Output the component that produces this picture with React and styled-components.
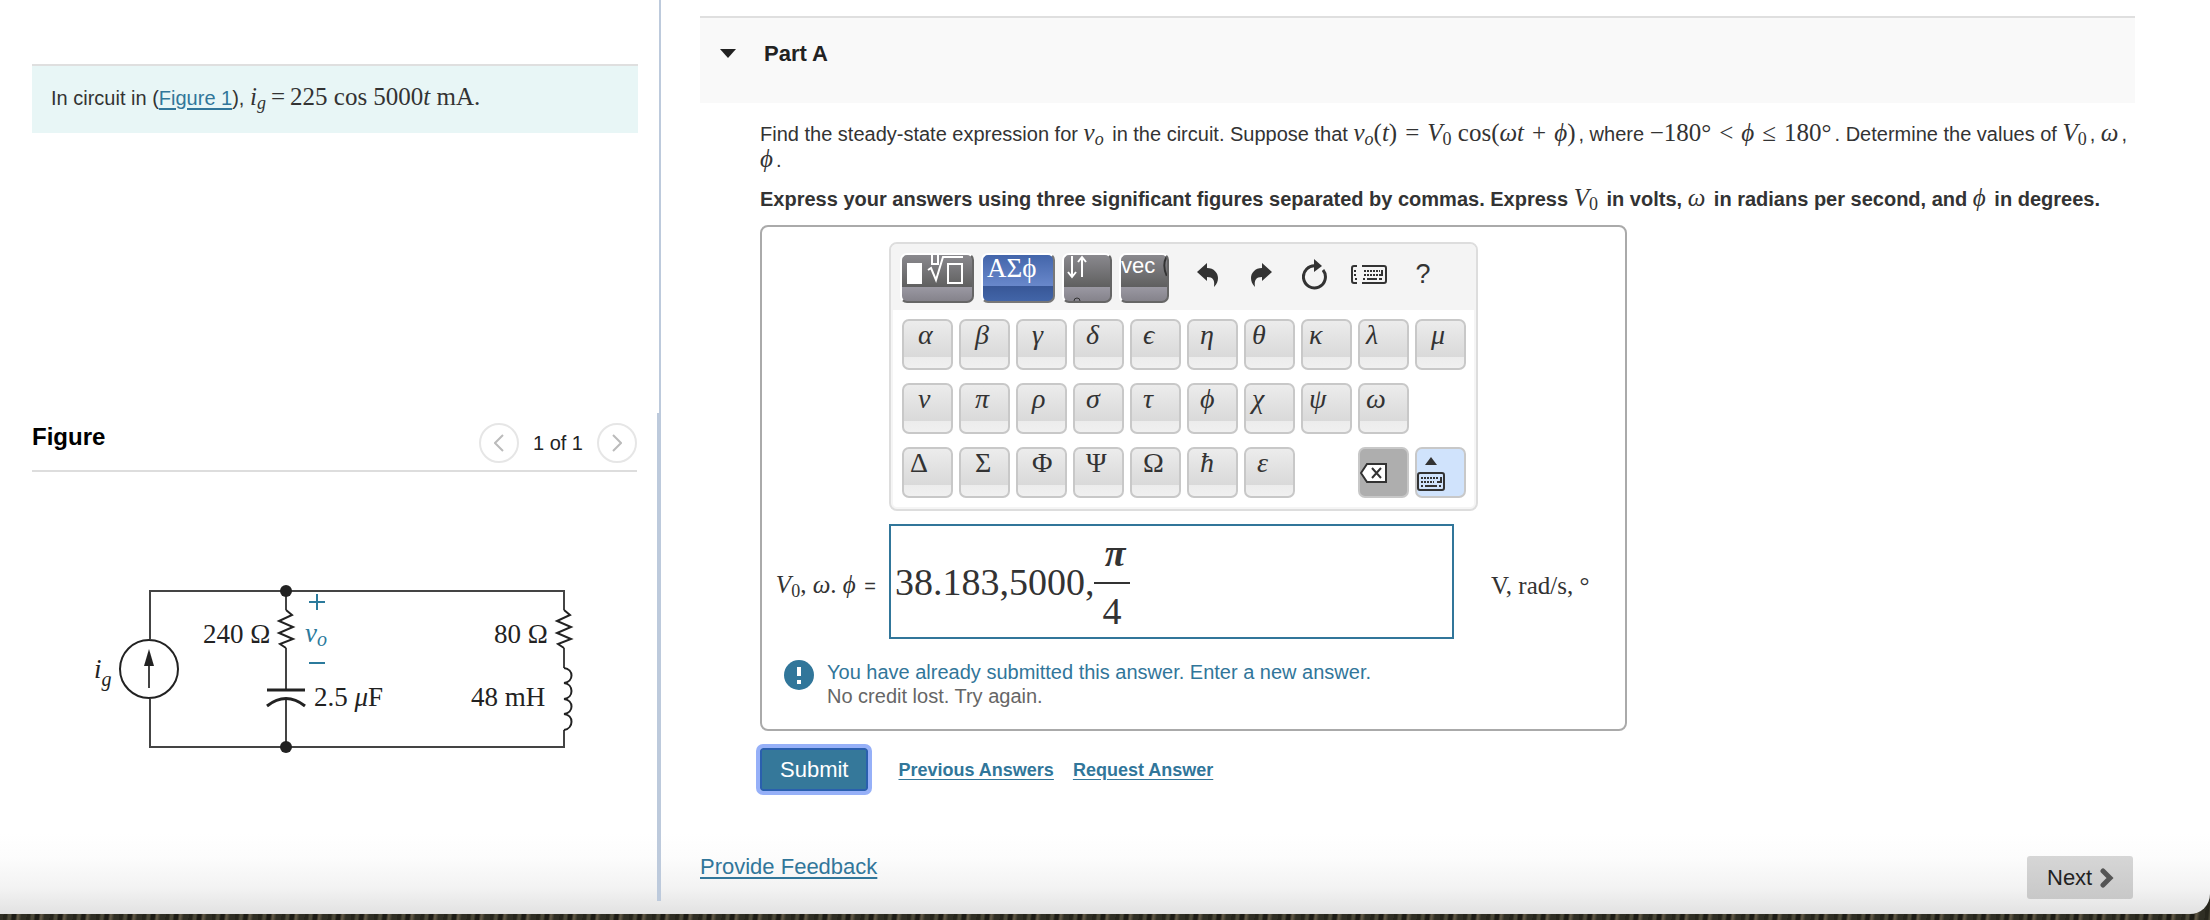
import React from "react";
import styled, { createGlobalStyle, css } from "styled-components";

const GlobalStyle = createGlobalStyle`
  :root {
    --color-link: #31769a;
    --color-text: #333;
    --color-line: #ddd;
    --color-divider: #bdcadc;
    --font-sans: "Liberation Sans", Arial, sans-serif;
    --font-serif: "Liberation Serif", "Times New Roman", serif;
  }

  * {
    box-sizing: border-box;
  }

  body {
    margin: 0;
    padding-bottom: 6px;
    font-family: var(--font-sans);
    font-size: 20px;
    line-height: 26px;
    color: var(--color-text);
    background: repeating-linear-gradient(
        97deg,
        #26251c 0 3px,
        #4a4737 5px 7px,
        #1c1b15 9px 12px,
        #5d5543 14px 15px,
        #2f2e24 18px 23px
      ),
      #2b2a21;
  }

  p {
    margin: 0;
  }

  button {
    font-family: inherit;
    cursor: pointer;
  }

  a {
    color: var(--color-link);
    text-underline-offset: 3px;
  }
`;

const Window = styled.div`
  display: flex;
  min-height: calc(100vh - 6px);
  border-bottom-right-radius: 20px;
  background: linear-gradient(to top, #e2e2e2, #f3f3f3 26px, #fcfcfc 56px, #fff 80px);
`;

/* left side */

const Aside = styled.aside`
  flex: 0 0 calc(30% - 2px);
  display: flex;
  flex-direction: column;
  padding-bottom: 13px;
`;

const Intro = styled.section`
  min-height: 413px;
  padding: 64px 21px 0 32px;
  border-right: 2px solid var(--color-divider);
`;

const IntroBox = styled.p`
  padding: 19px 19px 22px;
  border-top: 2px solid #dfdfdf;
  background: #e8f6f6;
`;

const FigurePanel = styled.section`
  flex: 1;
  padding: 10px 20px 0 32px;
  border-right: 4px solid var(--color-divider);
`;

const FigureHeader = styled.header`
  display: flex;
  justify-content: space-between;
  height: 49px;
  border-bottom: 2px solid var(--color-line);

  h2 {
    margin: 0;
    font-size: 24px;
    line-height: 28px;
    color: #000;
  }
`;

const Pager = styled.div`
  display: flex;
  align-items: center;
  gap: 14px;
  height: 40px;
  color: #222;
`;

const PagerButton = styled.button`
  display: flex;
  align-items: center;
  justify-content: center;
  width: 40px;
  height: 40px;
  padding: 0;
  border: 2px solid #e6e6e6;
  border-radius: 50%;
  background: #fff;
`;

const Circuit = styled.svg`
  display: block;
  width: 500px;
  height: 180px;
  margin: 108px 0 0 48px;
  font-family: var(--font-serif);
  font-size: 27px;
`;

/* maths */

const Math = styled.span`
  padding-right: 3px;
  font-family: var(--font-serif);
  font-size: 25px;
  font-weight: 400;
  line-height: 0;
  white-space: nowrap;

  sub {
    font-size: 18px;
    line-height: 0;
    vertical-align: -4px;
  }
`;

const Op = styled.span`
  padding: 0 ${(props) => (props.$tight ? 5 : 8)}px;
`;

/* right side */

const Main = styled.main`
  flex: 1;
  min-width: 0;
  display: flex;
  flex-direction: column;
  padding: 16px 75px 15px 39px;
`;

const PartHeader = styled.header`
  display: flex;
  gap: 28px;
  height: 87px;
  padding: 23px 20px;
  border-top: 2px solid #dfdfdf;
  background: #f9f9f9;

  svg {
    margin-top: 8px;
  }

  h2 {
    margin: 0;
    font-size: 22px;
    line-height: 26px;
    color: #222;
  }
`;

const PartBody = styled.div`
  display: flex;
  flex-direction: column;
  gap: 13px;
  padding: 18px 0 0 60px;
`;

const Instruction = styled.p`
  font-weight: 700;
`;

const AnswerBox = styled.div`
  display: grid;
  grid-template-columns: 103px 589px 1fr;
  column-gap: 13px;
  align-items: center;
  max-width: 867px;
  padding: 15px 0 21px 11px;
  border: 2px solid #aaa;
  border-radius: 8px;
`;

const Palette = styled.div`
  grid-column: 2 / 3;
  border: 2px solid var(--color-line);
  border-radius: 8px;
  background: #fff;
  box-shadow: inset 0 0 0 2px #f5f5f5;
  overflow: hidden;
`;

const Toolbar = styled.div`
  display: flex;
  gap: 7px;
  height: 66px;
  padding: 9px;
  background: #f4f4f4;
`;

const ToolTab = styled.button`
  flex: none;
  display: flex;
  width: ${(props) => (props.$wide ? 74 : 50)}px;
  height: 50px;
  padding: 0;
  border: solid;
  border-width: 2px;
  border-color: #fff #666 #666 #fff;
  border-radius: 7px;
  color: #fff;
  font-size: 22px;
  line-height: 22px;
  background: linear-gradient(#8a898e, #5f5f5f 70%, #9a98a2 70%, #85838b);
  overflow: hidden;

  ${(props) =>
    props.$active &&
    css`
      padding-left: 4px;
      border-color: #fff #777 #777 #fff;
      font-family: var(--font-serif);
      font-size: 27px;
      line-height: 26px;
      background: linear-gradient(#4365aa, #6988cb 68%, #385797 68%, #4265a8);
    `}
`;

const ToolIcons = styled.div`
  display: flex;
  margin-left: 4px;
`;

const IconButton = styled.button`
  display: flex;
  align-items: center;
  justify-content: center;
  width: 54px;
  height: 43px;
  padding: 0;
  border: 0;
  background: none;
  color: #333;
  font-size: 27px;
`;

const Keys = styled.div`
  display: grid;
  grid-template-columns: repeat(10, 51px);
  gap: 13px 6px;
  padding: 9px 11px 11px;
`;

const insets = { far: 14, mid: 11, near: 6 };

const Key = styled.button`
  display: flex;
  height: 51px;
  padding: 0 0 0 ${(props) => insets[props.$inset]}px;
  border: 2px solid #c8c8c8;
  border-radius: 7px;
  color: var(--color-text);
  font-family: var(--font-serif);
  font-size: 28px;
  font-style: ${(props) => (props.$upright ? "normal" : "italic")};
  line-height: 28px;
  background: linear-gradient(#ececec, #d9d9d9 77%, #ececec 77%, #f0f0f0);
`;

const DeleteKey = styled(Key)`
  grid-column: 9;
  align-items: center;
  padding: 0;
  background: #aeaeae;
`;

const KeyboardKey = styled(Key)`
  padding: 0;
  background: #d0e3fc;
`;

const AnswerLabel = styled.label`
  grid-column: 1;
  text-align: right;
  white-space: nowrap;
`;

const AnswerField = styled.div`
  display: flex;
  align-items: center;
  width: 565px;
  height: 115px;
  margin: 13px 0 21px;
  padding-left: 4px;
  border: 2px solid var(--color-link);
  background: #fff;
  font-family: var(--font-serif);
  font-size: 38px;
`;

const AnswerInput = styled.input`
  width: 199px;
  height: 60px;
  padding: 0;
  border: 0;
  outline: 0;
  color: inherit;
  font: inherit;
  background: none;
`;

const Fraction = styled.span`
  display: grid;
  justify-items: center;
  width: 36px;
  line-height: 38px;

  i {
    width: 100%;
    padding: 0 0 10px 6px;
    border-bottom: 2px solid;
    font-weight: 700;
    text-align: center;
  }

  span {
    padding-top: 8px;
  }
`;

const Feedback = styled.div`
  grid-column: 1 / -1;
  display: flex;
  gap: 13px;
  padding-left: 11px;
  line-height: 24px;
  color: #666;

  strong {
    font-weight: 400;
    color: var(--color-link);
  }
`;

const Actions = styled.div`
  display: flex;
  align-items: center;
  gap: 19px;
  padding-top: 4px;
  font-size: 18px;
  font-weight: 700;
`;

const SubmitButton = styled.button`
  height: 43px;
  margin-right: 11px;
  padding: 0 18px;
  border: 2px solid #2a5fae;
  border-radius: 3px;
  outline: 4px solid #96b0f8;
  color: #fff;
  font-size: 22px;
  background: #35789a;
`;

const Footer = styled.footer`
  display: flex;
  align-items: flex-start;
  justify-content: space-between;
  margin-top: auto;
  font-size: 22px;

  a {
    line-height: 22px;
  }
`;

const NextButton = styled.button`
  display: flex;
  align-items: center;
  gap: 8px;
  width: 106px;
  height: 43px;
  margin-right: 2px;
  padding: 0 0 0 20px;
  border: 0;
  border-radius: 3px;
  color: #222;
  font-size: 22px;
  background: linear-gradient(#d6d6d6, #c8c8c8);
`;

const keys = [
  ["α", "far"],
  ["β", "far"],
  ["γ", "far"],
  ["δ", "mid"],
  ["ϵ", "mid"],
  ["η", "mid"],
  ["θ", "near"],
  ["κ", "near"],
  ["λ", "near"],
  ["μ", "far"],
  ["ν", "far"],
  ["π", "far"],
  ["ρ", "far"],
  ["σ", "mid"],
  ["τ", "mid"],
  ["ϕ", "mid"],
  ["χ", "near"],
  ["ψ", "near"],
  ["ω", "near"],
];

const upperKeys = [
  ["Δ", "near", true],
  ["Σ", "far", true],
  ["Φ", "far", true],
  ["Ψ", "mid", true],
  ["Ω", "mid", true],
  ["ħ", "mid"],
  ["ε", "mid"],
];

function Chevron({ flip }) {
  return (
    <svg width="10" height="18" viewBox="0 0 10 18">
      <path
        d={flip ? "M1 1l8 8-8 8" : "M9 1L1 9l8 8"}
        fill="none"
        stroke="#bbb"
        strokeWidth="2"
      />
    </svg>
  );
}

function KeyboardIcon() {
  return (
    <g fill="none" stroke="#333" strokeWidth="2">
      <rect x="1" y="1" width="26" height="17" rx="2" />
      <path d="M4 6h17M4 10h13" strokeDasharray="2 1" />
      <path d="M24 5v5h-4M4 14h2M8 14h12M22 14h2" />
    </g>
  );
}

function CircuitFigure() {
  return (
    <Circuit viewBox="80 580 500 180" role="img" aria-label="Figure 1">
      <g fill="none" stroke="#444" strokeWidth="2">
        <path d="M150 639V591H564V610M150 699V747H564V730" />
        <path d="M286 591V610M286 648V690M286 698V747M564 648V668" />
        <path
          stroke="#222"
          d="M286 610l6 5-13 6 14 6-14 6 14 6-13 5 6 4M564 610l6 5-13 6 14 6-14 6 14 6-13 5 6 4"
        />
        <circle cx="149" cy="669" r="29" stroke="#222" />
        <path d="M149 688V664" />
        <path d="M267 690h38" strokeWidth="3" stroke="#222" />
        <path d="M267 706q19-15 38 0" strokeWidth="3" stroke="#222" />
        <path
          stroke="#222"
          d="M564 668c10 1 10 14 0 15c10 1 10 15 0 16c10 1 10 14 0 15c10 1 10 14 0 16"
        />
      </g>
      <path d="M149 649l5 17h-10z" fill="#222" />
      <circle cx="286" cy="591" r="6" fill="#222" />
      <circle cx="286" cy="747" r="6" fill="#222" />
      <g fill="#222">
        <text x="203" y="643">240 Ω</text>
        <text x="494" y="643">80 Ω</text>
        <text x="314" y="706">
          2.5 <tspan fontStyle="italic">μ</tspan>F
        </text>
        <text x="471" y="706">48 mH</text>
        <text x="94" y="678" fontStyle="italic">
          i
          <tspan dy="8" fontSize="20">
            g
          </tspan>
        </text>
      </g>
      <path d="M309 602h16M317 594v16M309 663h16" stroke="#2b7a9c" strokeWidth="2" />
      <text x="305" y="642" fill="#2b7a9c" fontStyle="italic">
        v
        <tspan dy="4" fontSize="20">
          o
        </tspan>
      </text>
    </Circuit>
  );
}

function MathPalette() {
  return (
    <Palette>
      <Toolbar>
        <ToolTab $wide aria-label="Templates">
          <svg width="70" height="32" viewBox="2 2 70 32" fill="none" stroke="#fff" strokeWidth="2">
            <rect x="7" y="10" width="15" height="21" fill="#fff" stroke="none" />
            <path d="M32 2v9h6V2" />
            <path d="M28 17l3-2 5 12L43 4h20" />
            <rect x="48" y="11" width="14" height="19" />
          </svg>
        </ToolTab>
        <ToolTab $wide $active>
          ΑΣϕ
        </ToolTab>
        <ToolTab aria-label="Arrows">
          <svg width="46" height="46" viewBox="0 0 46 46" fill="none" stroke="#fff" strokeWidth="2">
            <path d="M8 1v20M4 17l4 5 4-5M18 22V2M14 7l4-5 4 5" />
            <path d="M10 46q0-3 3-3t3 3" stroke="#333" strokeWidth="1" />
          </svg>
        </ToolTab>
        <ToolTab>
          vec
          <svg width="12" height="24" viewBox="0 0 12 24">
            <path d="M12 1q-5 9 0 20" fill="none" stroke="#333" strokeWidth="2" />
          </svg>
        </ToolTab>
        <ToolIcons>
          <IconButton aria-label="Undo">
            <svg width="21" height="24" viewBox="0 0 21 24">
              <path
                d="M0 9L10 0v5c7 0 11 5 11 10 0 3-1 6-4 9 1-7-1-10-7-10v4z"
                fill="currentColor"
              />
            </svg>
          </IconButton>
          <IconButton aria-label="Redo">
            <svg width="21" height="24" viewBox="0 0 21 24">
              <path
                d="M21 9L11 0v5C4 5 0 10 0 15c0 3 1 6 4 9-1-7 1-10 7-10v4z"
                fill="currentColor"
              />
            </svg>
          </IconButton>
          <IconButton aria-label="Reset">
            <svg width="26" height="32" viewBox="0 0 26 32">
              <path
                d="M14 7A11 11 0 1 0 21 11"
                fill="none"
                stroke="currentColor"
                strokeWidth="3"
              />
              <path d="M12 0l8 7-8 6z" fill="currentColor" />
            </svg>
          </IconButton>
          <IconButton aria-label="Keyboard shortcuts">
            <svg width="36" height="20" viewBox="0 0 36 20">
              <path
                d="M6 1H3Q1 1 1 3v13q0 2 2 2h3M11 1h22q2 0 2 2v13q0 2-2 2H11"
                fill="none"
                stroke="currentColor"
                strokeWidth="2"
              />
              <path
                d="M3 6h3M13 6h16M3 10h3M13 10h14"
                stroke="currentColor"
                strokeWidth="2"
                strokeDasharray="2 1"
              />
              <path
                d="M4 14h2M12 14h2M16 14h10M28 14h3M31 5v5h-3"
                fill="none"
                stroke="currentColor"
                strokeWidth="2"
              />
            </svg>
          </IconButton>
          <IconButton aria-label="Help">?</IconButton>
        </ToolIcons>
      </Toolbar>
      <Keys>
        {keys.map(([symbol, inset]) => (
          <Key key={symbol} $inset={inset}>
            {symbol}
          </Key>
        ))}
        <span />
        {upperKeys.map(([symbol, inset, upright]) => (
          <Key key={symbol} $inset={inset} $upright={upright}>
            {symbol}
          </Key>
        ))}
        <DeleteKey aria-label="Delete">
          <svg width="27" height="20" viewBox="0 0 27 20">
            <path d="M1 10L7 1h19v18H7z" fill="#fff" stroke="#333" strokeWidth="2" />
            <path d="M12 5l9 10M21 5l-9 10" stroke="#333" strokeWidth="2" />
          </svg>
        </DeleteKey>
        <KeyboardKey aria-label="Hide keyboard">
          <svg width="28" height="47" viewBox="0 0 28 47">
            <path d="M14 8l6 8H8z" fill="#333" />
            <g transform="translate(0 23)">
              <KeyboardIcon />
            </g>
          </svg>
        </KeyboardKey>
      </Keys>
    </Palette>
  );
}

export default function App() {
  return (
    <>
      <GlobalStyle />
      <Window>
        <Aside>
          <Intro>
            <IntroBox>
              In circuit in (<a href="#figure">Figure 1</a>),{" "}
              <Math>
                <i>i</i>
                <sub>
                  <i>g</i>
                </sub>
                <Op $tight>=</Op>225 cos 5000<i>t</i> mA.
              </Math>
            </IntroBox>
          </Intro>
          <FigurePanel id="figure">
            <FigureHeader>
              <h2>Figure</h2>
              <Pager>
                <PagerButton aria-label="Previous figure">
                  <Chevron />
                </PagerButton>
                <span>1 of 1</span>
                <PagerButton aria-label="Next figure">
                  <Chevron flip />
                </PagerButton>
              </Pager>
            </FigureHeader>
            <CircuitFigure />
          </FigurePanel>
        </Aside>
        <Main>
          <PartHeader>
            <svg width="16" height="9" viewBox="0 0 16 9">
              <path d="M0 0h16L8 9z" fill="#222" />
            </svg>
            <h2>Part A</h2>
          </PartHeader>
          <PartBody>
            <p>
              Find the steady-state expression for{" "}
              <Math>
                <i>v</i>
                <sub>
                  <i>o</i>
                </sub>
              </Math>{" "}
              in the circuit. Suppose that{" "}
              <Math>
                <i>v</i>
                <sub>
                  <i>o</i>
                </sub>
                (<i>t</i>)<Op>=</Op>
                <i>V</i>
                <sub>0</sub> cos(<i>ωt</i>
                <Op>+</Op>
                <i>ϕ</i>)
              </Math>
              , where{" "}
              <Math>
                −180°<Op>&lt;</Op>
                <i>ϕ</i>
                <Op>≤</Op>180°
              </Math>
              . Determine the values of{" "}
              <Math>
                <i>V</i>
                <sub>0</sub>
              </Math>
              ,{" "}
              <Math>
                <i>ω</i>
              </Math>
              ,{" "}
              <Math>
                <i>ϕ</i>
              </Math>
              .
            </p>
            <Instruction>
              Express your answers using three significant figures separated by commas. Express{" "}
              <Math>
                <i>V</i>
                <sub>0</sub>
              </Math>{" "}
              in volts,{" "}
              <Math>
                <i>ω</i>
              </Math>{" "}
              in radians per second, and{" "}
              <Math>
                <i>ϕ</i>
              </Math>{" "}
              in degrees.
            </Instruction>
            <AnswerBox>
              <MathPalette />
              <AnswerLabel htmlFor="answer">
                <Math>
                  <i>V</i>
                  <sub>0</sub>, <i>ω</i>. <i>ϕ</i>
                </Math>{" "}
                =
              </AnswerLabel>
              <AnswerField>
                <AnswerInput id="answer" defaultValue="38.183,5000," />
                <Fraction>
                  <i>π</i>
                  <span>4</span>
                </Fraction>
              </AnswerField>
              <Math>V, rad/s, °</Math>
              <Feedback>
                <svg width="30" height="30" viewBox="0 0 30 30">
                  <circle cx="15" cy="15" r="15" fill="#31769a" />
                  <path d="M15 7v9M15 20v4" stroke="#fff" strokeWidth="4" />
                </svg>
                <p>
                  <strong>You have already submitted this answer. Enter a new answer.</strong>
                  <br />
                  No credit lost. Try again.
                </p>
              </Feedback>
            </AnswerBox>
            <Actions>
              <SubmitButton>Submit</SubmitButton>
              <a href="#previous">Previous Answers</a>
              <a href="#request">Request Answer</a>
            </Actions>
          </PartBody>
          <Footer>
            <a href="#feedback">Provide Feedback</a>
            <NextButton>
              Next
              <svg width="14" height="20" viewBox="0 0 14 20">
                <path
                  d="M3 3l7 7-7 7"
                  fill="none"
                  stroke="#555"
                  strokeWidth="5"
                  strokeLinecap="round"
                />
              </svg>
            </NextButton>
          </Footer>
        </Main>
      </Window>
    </>
  );
}
